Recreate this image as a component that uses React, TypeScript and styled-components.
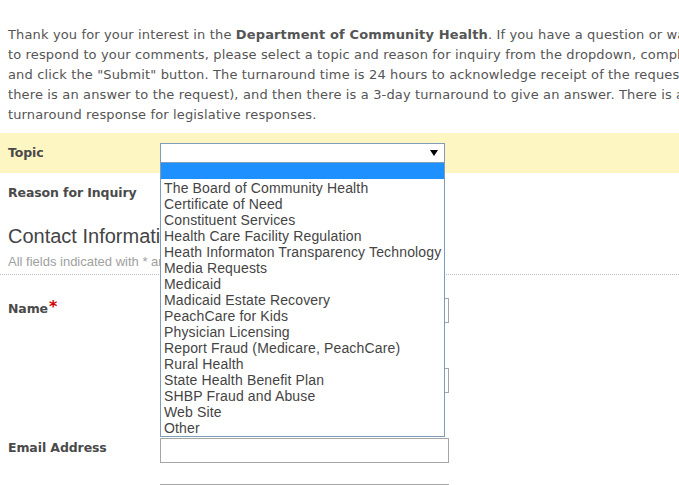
import styled, { createGlobalStyle } from "styled-components";

const GlobalStyle = createGlobalStyle`
  html, body {
    margin: 0;
    padding: 0;
    background: #fff;
    overflow: hidden;
  }
`;

const topics = [
  "The Board of Community Health",
  "Certificate of Need",
  "Constituent Services",
  "Health Care Facility Regulation",
  "Heath Informaton Transparency Technology",
  "Media Requests",
  "Medicaid",
  "Madicaid Estate Recovery",
  "PeachCare for Kids",
  "Physician Licensing",
  "Report Fraud (Medicare, PeachCare)",
  "Rural Health",
  "State Health Benefit Plan",
  "SHBP Fraud and Abuse",
  "Web Site",
  "Other",
];

const App = () => {
  return (
    <StPage>
      <GlobalStyle />
      <StIntro>
        <StLine>
          Thank you for your interest in the <b>Department of Community Health</b>. If you have a question or want us
        </StLine>
        <StLine>
          to respond to your comments, please select a topic and reason for inquiry from the dropdown, complete the form
        </StLine>
        <StLine>
          and click the "Submit" button. The turnaround time is 24 hours to acknowledge receipt of the request (if
        </StLine>
        <StLine>
          there is an answer to the request), and then there is a 3-day turnaround to give an answer. There is a 5-day
        </StLine>
        <StLine>turnaround response for legislative responses.</StLine>
      </StIntro>

      <StSelectRow $highlight>
        <StLabel>Topic</StLabel>
        <StSelectWrap>
          <StSelect $focused>
            <svg width="8" height="6" viewBox="0 0 8 6">
              <polygon points="0,0 8,0 4,6" fill="#000" />
            </svg>
          </StSelect>
          <StDropdown>
            <StOption $selected>&nbsp;</StOption>
            {topics.map((t) => (
              <StOption key={t}>{t}</StOption>
            ))}
          </StDropdown>
        </StSelectWrap>
      </StSelectRow>

      <StSelectRow>
        <StLabel>Reason for Inquiry</StLabel>
        <StSelectWrap>
          <StSelect />
        </StSelectWrap>
      </StSelectRow>

      <StSection>
        <StHeading>Contact Information</StHeading>
        <StNote>All fields indicated with * are required</StNote>
      </StSection>

      <StFields>
        <StFieldRow>
          <StLabel>
            Name<StRequired>*</StRequired>
          </StLabel>
          <StInputs>
            <StInput />
            <StSubLabel>First</StSubLabel>
            <StInput />
            <StSubLabel>Last</StSubLabel>
          </StInputs>
        </StFieldRow>
        <StFieldRow>
          <StLabel>Email Address</StLabel>
          <StInputs>
            <StInput />
          </StInputs>
        </StFieldRow>
        <StFieldRow>
          <StLabel>Phone</StLabel>
          <StInputs>
            <StInput />
          </StInputs>
        </StFieldRow>
      </StFields>
    </StPage>
  );
};

export default App;

const StPage = styled.div`
  width: 679px;
  font-family: "DejaVu Sans", Verdana, sans-serif;
  color: #555;
`;

const StIntro = styled.div`
  padding: 25px 0 0 8px;
  font-size: 13px;
  line-height: 20px;
  letter-spacing: 0.14px;
`;

const StLine = styled.div`
  white-space: nowrap;
`;

const StSelectRow = styled.div<{ $highlight?: boolean }>`
  display: grid;
  grid-template-columns: 160px 1fr;
  align-items: center;
  height: 40px;
  margin-top: ${(p) => (p.$highlight ? "8px" : "0")};
  background: ${(p) => (p.$highlight ? "#fdf6c3" : "transparent")};
`;

const StLabel = styled.div`
  padding-left: 8px;
  font-size: 12.5px;
  line-height: 20px;
  letter-spacing: -0.1px;
  font-weight: bold;
  color: #4a4a4a;
  white-space: nowrap;
`;

const StRequired = styled.span`
  color: #c00;
  font-size: 16px;
  position: relative;
  top: -1px;
  margin-left: 1px;
`;

const StSelectWrap = styled.div`
  position: relative;
  width: 285px;
`;

const StSelect = styled.div<{ $focused?: boolean }>`
  box-sizing: border-box;
  height: 20px;
  border: 1px solid ${(p) => (p.$focused ? "#7f9db9" : "#a6a6a6")};
  background: #fff;
  display: flex;
  align-items: center;
  justify-content: flex-end;
  padding-right: 6px;
`;

const StDropdown = styled.div`
  position: absolute;
  top: 20px;
  left: 0;
  z-index: 10;
  box-sizing: border-box;
  width: 285px;
  height: 274px;
  border: 1px solid #7f9db9;
  border-top: none;
  background: #fff;
`;

const StOption = styled.div<{ $selected?: boolean }>`
  box-sizing: border-box;
  height: 16px;
  padding: 1px 0 0 3px;
  font-family: "Liberation Sans", Arial, sans-serif;
  font-size: 14px;
  line-height: 16px;
  letter-spacing: 0.15px;
  color: #444;
  white-space: nowrap;
  background: ${(p) => (p.$selected ? "#1e90ff" : "transparent")};
`;

const StSection = styled.div`
  padding: 11px 0 4px 8px;
  border-bottom: 1px dotted #bbb;
  font-family: "Liberation Sans", Arial, sans-serif;
`;

const StHeading = styled.div`
  font-size: 20px;
  line-height: 24px;
  color: #444;
`;

const StNote = styled.div`
  margin-top: 6px;
  font-size: 13px;
  line-height: 16px;
  color: #a0a0a0;
`;

const StFields = styled.div`
  display: flex;
  flex-direction: column;
  gap: 21px;
  padding-top: 23px;
`;

const StFieldRow = styled.div`
  display: grid;
  grid-template-columns: 160px 1fr;
  align-items: start;
`;

const StInputs = styled.div`
  display: flex;
  flex-direction: column;
`;

const StInput = styled.div`
  box-sizing: border-box;
  width: 289px;
  height: 25px;
  border: 1px solid #a6a6a6;
  background: #fff;
`;

const StSubLabel = styled.div`
  height: 24px;
  margin-bottom: 21px;
  font-size: 11px;
  line-height: 18px;
  color: #777;
  &:last-child {
    margin-bottom: 0;
  }
`;
